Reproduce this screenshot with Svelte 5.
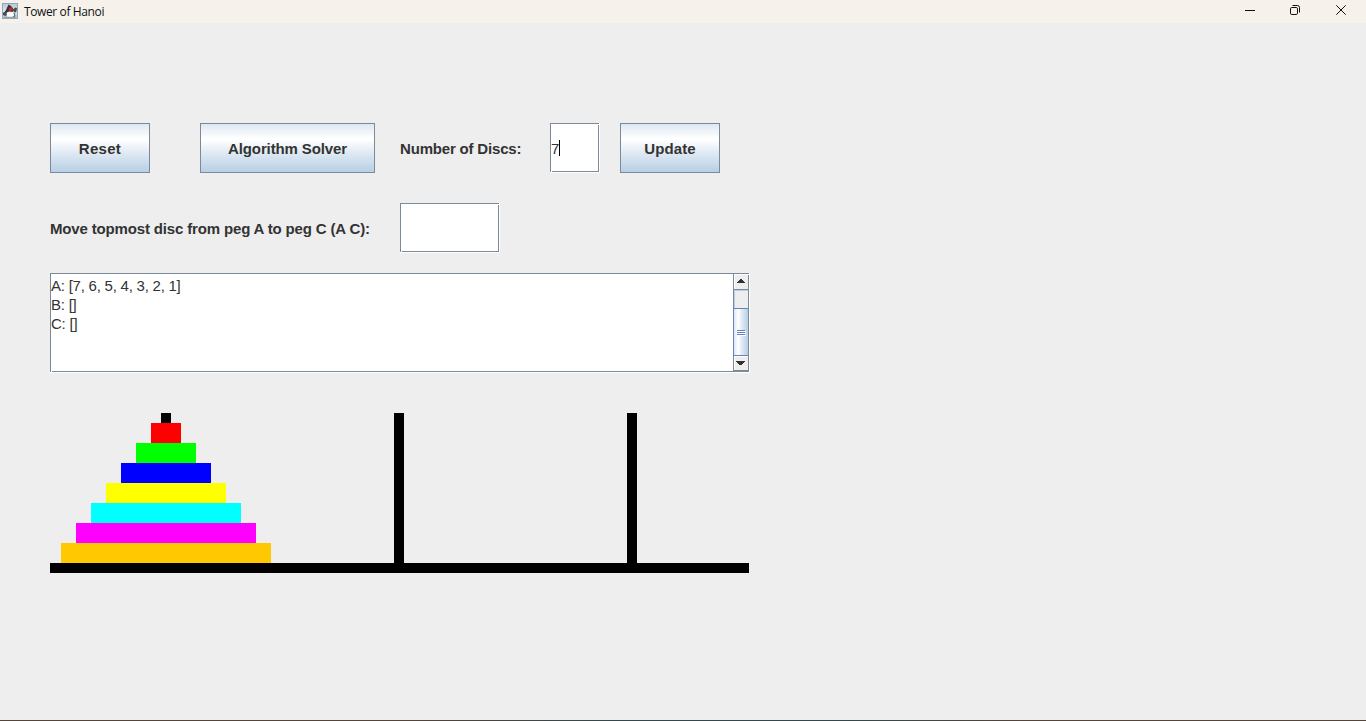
<script>
  const pegs = [[1, 2, 3, 4, 5, 6, 7], [], []];
  const names = ['A', 'B', 'C'];
  const colors = ['#ff0000', '#00ff00', '#0000ff', '#ffff00', '#00ffff', '#ff00ff', '#ffc800'];
  const lines = pegs.map((p, i) => `${names[i]}: [${[...p].reverse().join(', ')}]`);
</script>

<div class="window">
  <header>
    <svg class="app-icon" width="16" height="16" viewBox="0 0 16 16">
      <defs>
        <linearGradient id="tile" x1="0" y1="0" x2="0" y2="1">
          <stop offset="0" stop-color="#b5c9d8" />
          <stop offset=".55" stop-color="#dce7ef" />
          <stop offset="1" stop-color="#a9bfcd" />
        </linearGradient>
      </defs>
      <rect x=".5" y=".5" width="15" height="15" fill="url(#tile)" stroke="#8fa8b9" />
      <path d="M6.5 1.5 9 3 11.5 6 12 8 10 9 6 9 4 10.5 2 10 4 7Z" fill="#303339" />
      <path d="M4.5 10 7 8.5 10.5 9 12 11 11.5 13.5 8 14.5 5 13.5Z" fill="#fafafa" />
      <path d="M1 9.5 4 9.5 5 12 3.5 13 1 12ZM11.5 6.5 13 4.5 15 5 14.5 8.5 12.5 10Z" fill="#454950" />
      <path d="M12 10 13 13 11 14" stroke="#545a61" fill="none" />
      <circle cx="8.7" cy="6.2" r="1.9" fill="#d9241a" />
      <path d="M2 14.3H14" stroke="#8798a3" />
    </svg>
    <span class="title">Tower of Hanoi</span>
    <svg class="controls" width="138" height="23" viewBox="0 0 138 23" fill="none" stroke="#111">
      <path d="M17 10.5H27" />
      <rect x="62.5" y="7.5" width="7" height="7" rx="1.3" />
      <path d="M64.5 5.5H69.5Q71.5 5.5 71.5 7.5V12.5" />
      <path d="M108.3 5.3 117.7 14.7M117.7 5.3 108.3 14.7" />
    </svg>
  </header>

  <main>
    <div class="row">
      <button class="reset">Reset</button>
      <button class="solver">Algorithm Solver</button>
      <span class="label count-label">Number of Discs:</span>
      <div class="field count"><span>7</span><i class="caret"></i></div>
      <button class="update">Update</button>
    </div>
    <div class="row move">
      <span class="label move-label">Move topmost disc from peg A to peg C (A C):</span>
      <div class="field entry"></div>
    </div>
    <div class="field log">
      <div class="lines">
        {#each lines as line}<div>{line}</div>{/each}
      </div>
      <svg class="scroll" width="15" height="97" viewBox="0 0 15 97" shape-rendering="crispEdges">
        <defs>
          <linearGradient id="thumb">
            <stop offset="0" stop-color="#dde8f3" />
            <stop offset=".3" stop-color="#ffffff" />
            <stop offset=".6" stop-color="#dde8f3" />
            <stop offset="1" stop-color="#b8cfe5" />
          </linearGradient>
        </defs>
        <rect width="15" height="97" fill="#eee" />
        <path d="M1 .5H15M1.5 0V15M1 82.5H15M1.5 82V96" stroke="#fff" />
        <path d="M.5 0V97" stroke="#7a8a99" />
        <path d="M1 15.5H15M1 96.5H15" stroke="#7a8a99" />
        <path d="M1 16.5H15M1.5 16V34" stroke="#b8cfe5" />
        <rect x="1" y="35" width="14" height="46" fill="url(#thumb)" />
        <path d="M0 34.5H15M0 81.5H15M.5 34V82" stroke="#6382bf" />
        <path d="M4 56.5H12M4 58.5H12M4 60.5H12" stroke="#6382bf" />
        <path d="M5 57.5H13M5 59.5H13M5 61.5H13" stroke="#fff" />
        <path d="M7 5H9V6H10V7H11V8H12V9H4V8H5V7H6V6H7Z" fill="#333" />
        <path d="M3 87H12V88H11V89H10V90H9V91H6V90H5V89H4V88H3Z" fill="#333" />
      </svg>
    </div>

    <div class="board">
      <div class="pegs">
        {#each pegs as discs}
          <div class="peg">
            <div class="rod" style="height: {150 - discs.length * 20}px"></div>
            {#each discs as d}
              <div class="disc" style="width: {d * 30}px; background: {colors[d - 1]}"></div>
            {/each}
          </div>
        {/each}
      </div>
      <div class="base"></div>
    </div>
  </main>
  <footer></footer>
</div>

<style>
  :global(body) { margin: 0; overflow: hidden; }
  .window {
    display: flex;
    flex-direction: column;
    width: 1366px;
    height: 721px;
    background: #eee;
    color: #333;
    font-family: "Liberation Sans", Arial, sans-serif;
    font-size: 15px;
  }
  header {
    display: flex;
    align-items: flex-start;
    height: 23px;
    background: #f6f2eb;
  }
  .app-icon { margin: 3px 6px 0 2px; }
  .title {
    flex: 1;
    font: 12px/23px "Open Sans", "Noto Sans", sans-serif;
    letter-spacing: -0.38px;
    color: #111;
  }
  main { flex: 1; padding: 100px 0 0 50px; }
  footer { height: 1px; background: linear-gradient(90deg, #55443a 30%, #33484c 45%, #33484c 62%, #55443a 75%); }
  .row { display: flex; align-items: center; height: 50px; }
  .move { margin: 30px 0 20px; }
  button {
    box-sizing: border-box;
    width: 100px;
    height: 50px;
    padding: 0;
    border: 1px solid #7a8a99;
    border-radius: 0;
    background: linear-gradient(#dde8f3 0%, #fff 30%, #fff 33%, #dde8f3 62%, #b8cfe5 100%);
    font: bold 15px "Liberation Sans", Arial, sans-serif;
    color: #333;
  }
  .reset { letter-spacing: 0.3px; }
  .update { letter-spacing: 0.1px; }
  .solver { width: 175px; margin: 0 25px 0 50px; letter-spacing: -0.12px; }
  .label { font-weight: bold; white-space: nowrap; }
  .count-label { width: 150px; letter-spacing: -0.18px; }
  .move-label { width: 350px; letter-spacing: -0.155px; }
  .field {
    box-sizing: border-box;
    display: flex;
    background:
      linear-gradient(#fff, #fff) 100% 0 / 1px 100% no-repeat,
      linear-gradient(#fff, #fff) 0 100% / 100% 1px no-repeat,
      linear-gradient(#7a8a99, #7a8a99) 0 0 / calc(100% - 1px) 1px no-repeat,
      linear-gradient(#7a8a99, #7a8a99) 0 0 / 1px calc(100% - 1px) no-repeat,
      linear-gradient(#7a8a99, #7a8a99) right 1px top 2px / 1px calc(100% - 3px) no-repeat,
      linear-gradient(#7a8a99, #7a8a99) left 2px bottom 1px / calc(100% - 3px) 1px no-repeat,
      #fff;
  }
  .count { width: 50px; height: 50px; padding-left: 1px; align-items: center; margin-right: 20px; }
  .caret { width: 1px; height: 16px; background: #000; }
  .entry { width: 100px; height: 50px; }
  .log { width: 700px; height: 100px; padding: 1px 2px 2px 1px; }
  .lines { flex: 1; padding-top: 2px; line-height: 19px; letter-spacing: -0.23px; }
  .scroll { display: block; }
  .board { width: 699px; padding-top: 40px; }
  .pegs { display: flex; height: 150px; }
  .peg { box-sizing: border-box; width: 233px; padding-right: 1px; display: flex; flex-direction: column; align-items: center; justify-content: flex-end; }
  .rod { width: 10px; background: #000; }
  .disc { height: 20px; }
  .base { height: 10px; background: #000; }
</style>
